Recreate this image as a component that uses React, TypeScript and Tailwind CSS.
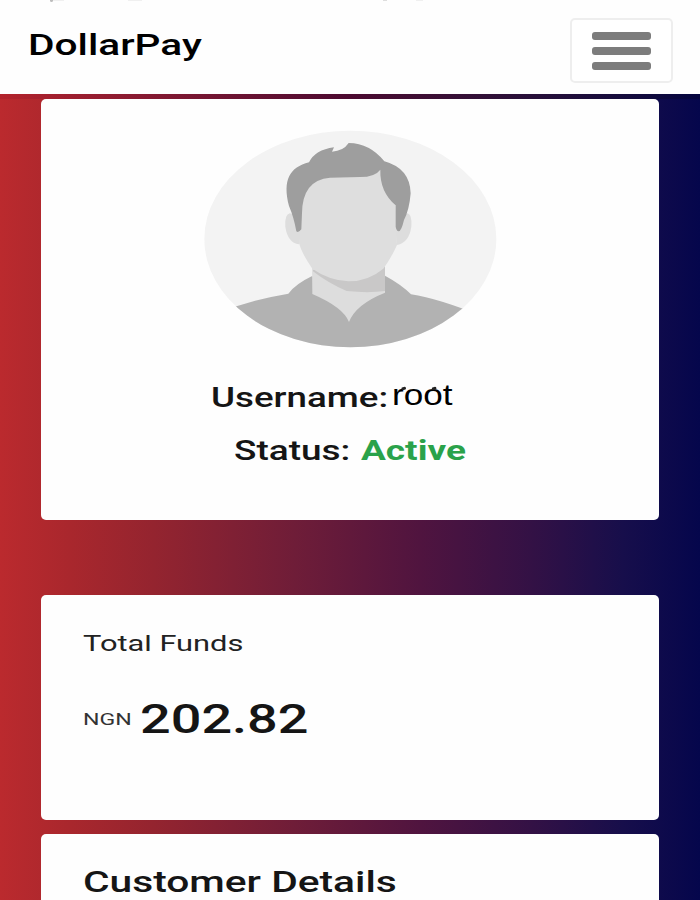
import React from 'react';

const Avatar: React.FC = () => (
    <svg viewBox="0 0 930 720" className="block h-[240px] w-[310px]" aria-hidden="true">
        <defs>
            <clipPath id="avatar-frame">
                <ellipse cx="466" cy="357" rx="438" ry="325" />
            </clipPath>
        </defs>
        <g clipPath="url(#avatar-frame)">
            <rect width="930" height="720" fill="#f3f3f3" />
            {/* shirt */}
            <path d="M60 582 Q165 540 280 521 Q302 492 350 469 L570 467 Q620 494 648 523 Q730 535 870 592 V720 H60 Z" fill="#b2b2b2" />
            {/* neck */}
            <path d="M351 430 H570 V518 Q482 553 462 606 Q445 562 352 522 Z" fill="#dddddd" />
            <path d="M354 450 L570 440 V513 Q520 520 455 513 Q400 490 354 454 Z" fill="#c9c8c8" />
            {/* ears and face */}
            <path d="M284 280 Q268 285 271 320 Q278 368 312 373 L330 290 Z" fill="#dddddd" />
            <path d="M638 280 Q652 285 649 320 Q642 368 606 375 L596 290 Z" fill="#dddddd" />
            <path d="M318 300 L322 180 L400 130 L560 130 L602 250 L606 375 Q588 415 565 446 Q520 484 460 484 Q400 480 352 446 Q320 400 312 370 Z" fill="#dedede" />
            {/* hair */}
            <path d="M304 334 Q296 290 282 258 C262 180 284 142 342 127 Q360 90 417 82 L411 95 Q445 93 461 69 Q525 70 568 124 Q645 145 647 220 Q643 270 627 300 Q619 334 611 334 Q604 332 602 320 V256 Q554 215 556 149 Q540 171 495 171 L405 173 Q322 180 321 280 L319 328 Q310 340 304 334 Z" fill="#9e9e9e" />
        </g>
    </svg>
);

const MenuButton: React.FC = () => (
    <button
        aria-label="Menu"
        className="flex h-[65px] w-[103px] flex-col items-center justify-center gap-[7px] rounded-[5px] border-2 border-[#eeeeee] bg-white"
    >
        <span className="h-[8px] w-[59px] rounded-[3px] bg-[#7c7c7c]" />
        <span className="h-[8px] w-[59px] rounded-[3px] bg-[#7c7c7c]" />
        <span className="h-[8px] w-[59px] rounded-[3px] bg-[#7c7c7c]" />
    </button>
);

export default function App() {
    return (
        <div className="flex h-[900px] w-[700px] flex-col overflow-hidden bg-[linear-gradient(to_right,#bb2a2e_0%,#a9272d_10%,#94242f_22%,#6f1d38_42%,#50143f_60%,#331145_76%,#170e4b_89%,#05064c_100%)] font-['Roboto',sans-serif] text-[#151515]">
            <header className="relative flex h-[94px] shrink-0 justify-between bg-[#fefefe] pt-[18px] pr-[27px] pl-[28px]">
                <span className="absolute top-0 left-[50px] h-[2px] w-[3px] rounded-b bg-[#bdbdbd]" />
                <span className="absolute top-0 left-[53px] h-px w-[11px] bg-[#f0f0f0]" />
                <span className="absolute top-0 left-[128px] h-px w-[14px] bg-[#f0f0f0]" />
                <span className="absolute top-0 left-[383px] h-px w-[4px] bg-[#dedede]" />
                <span className="absolute top-0 left-[416px] h-px w-[7px] bg-[#f0f0f0]" />
                <span className="h-[52px] origin-left scale-x-[1.355] text-[30px] leading-[53px] font-medium whitespace-nowrap text-black">DollarPay</span>
                <MenuButton />
            </header>

            <main className="flex flex-col px-[41px]">
                <div className="-mx-[41px] h-[5px] bg-linear-to-r from-[#b3232b] via-[#4c0930] to-[#05053f]" />

                <section className="flex h-[421px] flex-col items-center rounded-[5px] bg-[#fefefe] pt-[21px]">
                    <Avatar />
                    <div className="mt-[16px] flex h-[40px] w-[618px] pl-[170px]">
                        <span className="w-[181px] origin-left scale-x-[1.36] text-[27px] leading-[45px] font-medium whitespace-nowrap">Username:</span>
                        <span className="relative origin-left scale-x-[1.17] font-['Liberation_Sans',sans-serif] text-[30px] leading-[37px] text-black">
                            root
                            <span className="absolute top-[11px] left-[8px] h-[3px] w-[4px] -rotate-12 rounded-full bg-[#222222]" />
                            <span className="absolute top-[11px] left-[34px] h-[3px] w-[4px] -rotate-12 rounded-full bg-[#222222]" />
                        </span>
                    </div>
                    <div className="mt-[13px] flex h-[40px] w-[618px] pl-[193px] text-[27px] leading-[45px] font-medium whitespace-nowrap">
                        <span className="w-[127px] origin-left scale-x-[1.37]">Status:</span>
                        <span className="origin-left scale-x-[1.37] font-bold text-[#2aa24a]">Active</span>
                    </div>
                </section>

                <section className="mt-[75px] flex h-[225px] flex-col items-start rounded-[5px] bg-[#fefefe] pt-[33px] pl-[42px]">
                    <h2 className="origin-left scale-x-[1.4] text-[22px] leading-[32px] whitespace-nowrap text-[#222222]">Total Funds</h2>
                    <div className="mt-[35px] flex h-[48px]">
                        <span className="w-[57px] origin-left scale-x-[1.4] text-[16.5px] leading-[50px] text-[#333333]">NGN</span>
                        <span className="origin-left scale-x-[1.35] text-[40px] leading-[49px] font-medium">202.82</span>
                    </div>
                </section>

                <section className="mt-[14px] flex h-[80px] items-start rounded-t-[5px] bg-[#fefefe] pt-[28px] pl-[42px]">
                    <h2 className="origin-left scale-x-[1.357] text-[30px] leading-[40px] font-medium whitespace-nowrap">Customer Details</h2>
                </section>
            </main>
        </div>
    );
}
